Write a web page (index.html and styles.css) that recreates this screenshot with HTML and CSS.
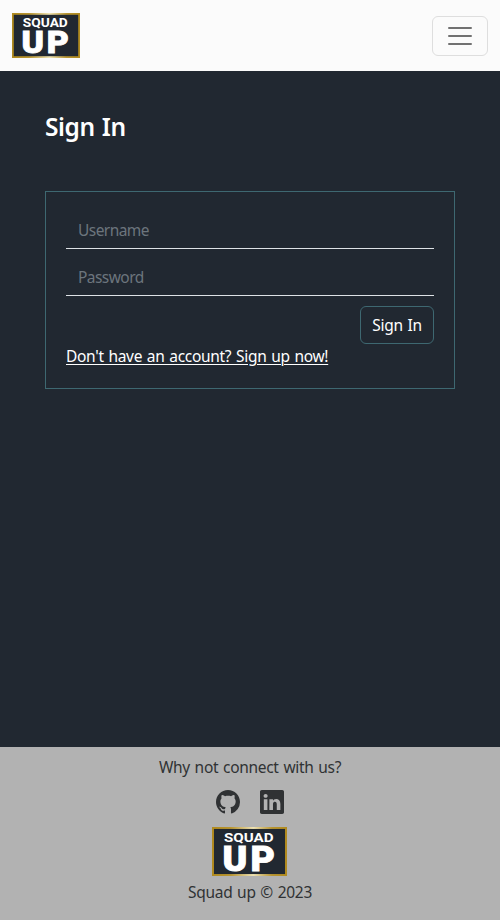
FILE: index.html
```html
<!DOCTYPE html>
<html lang="en">
<head>
<meta charset="utf-8">
<title>Squad Up</title>
<link rel="stylesheet" href="styles.css">
</head>
<body>
<svg class="defs" width="0" height="0" aria-hidden="true">
  <defs>
    <linearGradient id="gold" x1="0" y1="0" x2="1" y2="0">
      <stop offset="0" stop-color="#b08a1e"/><stop offset=".25" stop-color="#b89532"/>
      <stop offset=".55" stop-color="#efe3b4"/><stop offset=".8" stop-color="#b89532"/>
      <stop offset="1" stop-color="#b08a1e"/>
    </linearGradient>
  </defs>
</svg>
<header class="navbar">
  <a class="brand" href="#">
    <svg class="logo" viewBox="0 0 68 45" preserveAspectRatio="none">
      <rect width="68" height="45" fill="url(#gold)"/>
      <rect x="1.8" y="1.8" width="64.4" height="41.4" fill="#212831"/>
      <text class="logo-small" x="10.8" y="13.6" textLength="45" lengthAdjust="spacingAndGlyphs">SQUAD</text>
      <text class="logo-big" x="9.6" y="40" textLength="50" lengthAdjust="spacingAndGlyphs">UP</text>
    </svg>
  </a>
  <button class="toggler" aria-label="Toggle navigation">
    <svg width="30" height="30" viewBox="0 0 30 30"><path stroke="#000" stroke-opacity=".55" stroke-linecap="round" stroke-miterlimit="10" stroke-width="2" d="M4 7h22M4 15h22M4 23h22"/></svg>
  </button>
</header>
<main class="page">
  <h1 class="title"><span class="title-text">Sign In</span></h1>
  <form class="card">
    <input class="field" type="text" placeholder="Username">
    <input class="field" type="password" placeholder="Password">
    <div class="actions"><button class="submit" type="button">Sign In</button></div>
    <a class="signup" href="#">Don't have an account? Sign up now!</a>
  </form>
</main>
<footer class="footer">
  <p class="connect">Why not connect with us?</p>
  <div class="social">
    <svg width="24" height="24" viewBox="0 0 16 16" fill="currentColor"><path d="M8 0C3.58 0 0 3.58 0 8c0 3.54 2.29 6.53 5.47 7.59.4.07.55-.17.55-.38 0-.19-.01-.82-.01-1.49-2.01.37-2.53-.49-2.69-.94-.09-.23-.48-.94-.82-1.13-.28-.15-.68-.52-.01-.53.63-.01 1.08.58 1.23.82.72 1.21 1.87.87 2.33.66.07-.52.28-.87.51-1.07-1.78-.2-3.64-.89-3.64-3.95 0-.87.31-1.59.82-2.15-.08-.2-.36-1.02.08-2.12 0 0 .67-.21 2.2.82.64-.18 1.32-.27 2-.27s1.36.09 2 .27c1.53-1.04 2.2-.82 2.2-.82.44 1.1.16 1.92.08 2.12.51.56.82 1.27.82 2.15 0 3.07-1.87 3.75-3.65 3.95.29.25.54.73.54 1.48 0 1.07-.01 1.93-.01 2.2 0 .21.15.46.55.38A8.01 8.01 0 0 0 16 8c0-4.42-3.58-8-8-8z"/></svg>
    <svg width="24" height="24" viewBox="0 0 16 16" fill="currentColor"><path d="M0 1.146C0 .513.526 0 1.175 0h13.65C15.474 0 16 .513 16 1.146v13.708c0 .633-.526 1.146-1.175 1.146H1.175C.526 16 0 15.487 0 14.854zm4.943 12.248V6.169H2.542v7.225zm-1.2-8.212c.837 0 1.358-.554 1.358-1.248-.015-.709-.52-1.248-1.342-1.248S2.4 3.226 2.4 3.934c0 .694.521 1.248 1.327 1.248zm4.908 8.212V9.359c0-.216.016-.432.08-.586.173-.431.568-.878 1.232-.878.869 0 1.216.662 1.216 1.634v3.865h2.401V9.25c0-2.22-1.184-3.252-2.764-3.252-1.274 0-1.845.7-2.165 1.193v.025h-.016l.016-.025V6.169h-2.4c.03.678 0 7.225 0 7.225z"/></svg>
  </div>
  <svg class="logo footer-logo" viewBox="0 0 68 45" preserveAspectRatio="none">
    <rect width="68" height="45" fill="url(#gold)"/>
    <rect x="1.8" y="1.8" width="64.4" height="41.4" fill="#212831"/>
    <text class="logo-small" x="10.8" y="13.6" textLength="45" lengthAdjust="spacingAndGlyphs">SQUAD</text>
    <text class="logo-big" x="9.6" y="40" textLength="50" lengthAdjust="spacingAndGlyphs">UP</text>
  </svg>
  <p class="copyright">Squad up © 2023</p>
</footer>
</body>
</html>
```
FILE: styles.css
```css
* { box-sizing: border-box; }
body {
  margin: 0;
  min-height: 920px;
  display: flex;
  flex-direction: column;
  background: #212831;
  color: #fff;
  font: 15.5px/24px "Noto Sans", "Open Sans", sans-serif;
  letter-spacing: -0.3px;
  word-spacing: 1px;
}
.defs { position: absolute; }
.navbar {
  height: 71px;
  padding: 0 12px;
  display: flex;
  align-items: center;
  justify-content: space-between;
  background: #fbfbfb;
}
.brand { display: flex; }
.logo { display: block; width: 68px; height: 45px; }
.logo text { font-family: Roboto, sans-serif; fill: #fff; letter-spacing: 0; }
.logo .logo-small { font-size: 12.2px; font-weight: 700; }
.logo .logo-big { font-size: 31.5px; font-weight: 900; letter-spacing: 2.5px; stroke: #fff; stroke-width: 0.8px; }
.toggler {
  width: 56px;
  height: 40px;
  padding: 0;
  display: flex;
  align-items: center;
  justify-content: center;
  background: transparent;
  border: 1px solid #dedede;
  border-radius: 6px;
}
.page { flex: 1; padding: 40px 45px 0; }
.title {
  margin: 0 0 48px;
  font-size: 24.5px;
  line-height: 32px;
  font-weight: 600;
  letter-spacing: -0.4px;
}
.card {
  height: 198px;
  padding: 20px;
  border: 1px solid #3e6871;
}
.field {
  display: block;
  width: 100%;
  height: 37px;
  margin: 0 0 10px;
  padding: 0 12px;
  background: transparent;
  border: 0;
  border-bottom: 1px solid #dee2e6;
  color: #fff;
  font: inherit;
  letter-spacing: -0.55px;
}
.field::placeholder { color: #6c757d; opacity: 1; }
.actions { display: flex; justify-content: flex-end; }
.submit {
  width: 74px;
  height: 38px;
  padding: 0;
  background: transparent;
  border: 1px solid #3e6871;
  border-radius: 6px;
  color: #fff;
  font: inherit;
  letter-spacing: inherit;
  word-spacing: inherit;
}
.signup {
  display: block;
  width: max-content;
  color: #fff;
  text-decoration: underline;
  text-decoration-thickness: 1px;
  text-underline-offset: 2px;
}
.footer {
  height: 173px;
  padding-top: 8px;
  display: flex;
  flex-direction: column;
  align-items: center;
  background: #b2b2b2;
  color: #303234;
}
.footer p { margin: 0; }
.social { display: flex; gap: 20px; margin-top: 11px; }
.footer-logo { width: 75px; height: 49px; margin: 13px 1px 4px 0; }
```
